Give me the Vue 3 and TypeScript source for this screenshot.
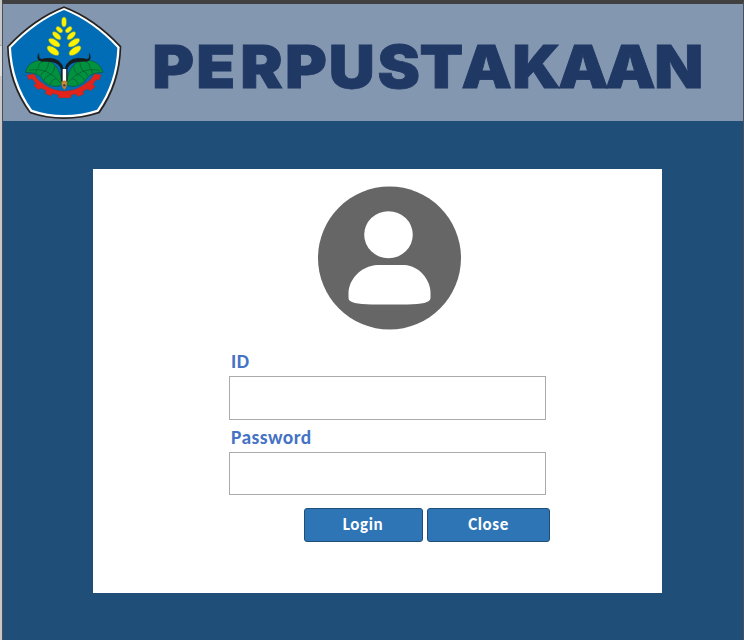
<script setup lang="ts">
import { reactive } from 'vue'

interface Field {
  key: 'id' | 'password'
  label: string
  type: string
}

interface Grain {
  x: number
  y: number
  rx: number
  ry: number
  angle: number
}

const fields: Field[] = [
  { key: 'id', label: 'ID', type: 'text' },
  { key: 'password', label: 'Password', type: 'password' },
]

const form = reactive({ id: '', password: '' })

// The heading is stretched horizontally; each letter is centred on its own stop.
const stretch = 1.09
const letterStops = [33.3, 75.8, 121.5, 166, 211.7, 258.7, 301.5, 346.7, 396.5, 443.3, 490.3, 538.7]
  .map((x) => (x / stretch).toFixed(2))
  .join(' ')

const grains: Grain[] = [
  { x: 192, y: 66, rx: 7.5, ry: 15, angle: 0 },
  { x: 178, y: 89, rx: 7, ry: 12, angle: -48 },
  { x: 206, y: 89, rx: 7, ry: 12, angle: 48 },
  { x: 170, y: 107, rx: 8, ry: 16, angle: -48 },
  { x: 214, y: 107, rx: 8, ry: 16, angle: 48 },
  { x: 163, y: 128, rx: 9, ry: 20, angle: -57 },
  { x: 222, y: 128, rx: 9, ry: 20, angle: 57 },
  { x: 159, y: 152, rx: 10, ry: 21, angle: -55 },
  { x: 225, y: 152, rx: 10, ry: 21, angle: 55 },
]

function close(): void {
  form.id = ''
  form.password = ''
}
</script>

<template>
  <div class="window">
    <div class="edge"><span class="edge-tab"></span></div>
    <main class="screen">
      <header class="header">
        <svg class="logo" viewBox="18 18 348 342" aria-hidden="true">
          <path
            d="M192 19 Q284 53 364 139 Q361 254 299 340 Q247 357 192 357 Q138 357 89 340 Q24 254 21 139 Q102 53 192 19Z"
            fill="#262422"
          />
          <path
            d="M192 24 Q282 59 359 141 Q355 251 295 335 Q246 352 192 352 Q139 352 92 335 Q30 251 26 141 Q104 59 192 24Z"
            fill="#fff"
          />
          <path
            d="M192 30 Q279 65 352 143 Q348 248 291 329 Q244 345 192 345 Q141 345 96 329 Q38 248 33 143 Q107 65 192 30Z"
            fill="#006db6"
          />
          <ellipse
            v-for="(g, i) in grains"
            :key="i"
            :cx="g.x"
            :cy="g.y"
            :rx="g.rx"
            :ry="g.ry"
            :transform="`rotate(${g.angle} ${g.x} ${g.y})`"
            fill="#fff200"
            stroke="#4c8d68"
            stroke-width="1.5"
          />
          <path
            d="M80 225 L102 221 Q111 239 127 249 Q158 273 193 273 Q228 273 258 249 Q275 238 283 221 L304 224 L298 241 L289 239 L279 253 L286 260 L271 273 L263 267 L249 275 L252 283 L233 290 L228 283 L214 285 L213 294 L175 294 L174 285 L158 281 L153 288 L135 281 L138 272 L123 265 L116 270 L101 257 L107 250 L96 236 L86 240Z"
            fill="#e2231a"
            stroke="#414d69"
            stroke-width="1.5"
          />
          <g fill="#00923f" stroke="#0c512f" stroke-width="2">
            <path d="M76 217 Q84 187 113 182 Q147 176 166 197 Q182 216 187 253 Q170 264 149 256 Q132 250 123 232 Q112 218 76 217Z" />
            <path d="M309 217 Q300 187 272 182 Q238 176 219 197 Q203 216 198 253 Q215 264 236 256 Q253 250 263 232 Q274 218 309 217Z" />
          </g>
          <g fill="none" stroke="#0a5630" stroke-width="2">
            <path d="M86 211 Q142 198 184 251 M114 205 Q115 189 128 183 M137 212 Q145 201 146 187 M154 222 Q165 211 164 198 M112 206 L107 220 M137 212 Q123 218 122 228 M155 223 Q137 227 132 241 M169 236 Q153 239 151 254" />
            <path d="M299 211 Q243 198 201 251 M271 205 Q270 189 257 183 M248 212 Q240 201 239 187 M231 222 Q220 211 221 198 M273 206 L278 220 M248 212 Q262 218 263 228 M230 223 Q248 227 253 241 M216 236 Q232 239 234 254" />
          </g>
          <path
            d="M116 161 Q107 179 125 184 Q143 183 157 185 Q181 191 184 210 L184 244 L190 244 L190 207 Q184 178 151 175 Q135 175 124 178 Q114 175 116 161Z M268 161 Q277 179 260 184 Q242 183 228 185 Q204 191 201 210 L201 244 L195 244 L195 207 Q201 178 234 175 Q250 175 261 178 Q271 175 268 161Z"
            fill="#171b1b"
            stroke="#171b1b"
            stroke-width="2"
          />
          <path d="M187 207h12v38h-12z" fill="#fff" />
          <path d="M187 207v38M200 207v38" fill="none" stroke="#252525" stroke-width="2" />
          <path d="M185 245 Q193 239 201 245 Q203 259 193 269 Q183 259 185 245Z" fill="#cd8540" stroke="#805e30" />
          <circle cx="193" cy="256" r="3.5" fill="#353d35" />
        </svg>
        <h1 class="title">
          <svg class="title-art" viewBox="0 0 590 100">
            <text class="title-text" :x="letterStops" y="68" :transform="`scale(${stretch} 1)`">PERPUSTAKAAN</text>
          </svg>
        </h1>
      </header>
      <form class="card" @submit.prevent>
        <svg class="avatar" viewBox="-0.5 0 144 144" aria-hidden="true">
          <circle cx="72" cy="72" r="71.5" fill="#666" />
          <ellipse cx="71" cy="48.7" rx="24.3" ry="23.5" fill="#fff" />
          <path d="M60 79 H87 C102 80 113 94 113 107 V112 C113 117 104 118 90 118.500 H54 C40 118 31 117 31 112 V107 C31 94 43 80 60 79Z" fill="#fff" />
        </svg>
        <div class="fields">
          <label v-for="f in fields" :key="f.key" class="field" :class="f.key">
            <span class="label">{{ f.label }}</span>
            <input v-model="form[f.key]" class="input" :type="f.type" />
          </label>
        </div>
        <div class="actions">
          <button class="button login" type="submit">Login</button>
          <button class="button close" type="button" @click="close">Close</button>
        </div>
      </form>
    </main>
  </div>
</template>

<style>
body {
  margin: 0;
}
</style>

<style scoped>
.window {
  display: flex;
  box-sizing: border-box;
  width: 744px;
  height: 640px;
  overflow: hidden;
  font-family: Calibri, Carlito, Lato, sans-serif;
}
.edge {
  width: 2px;
  padding-top: 45px;
  box-sizing: border-box;
  background: #c8c8c8;
}
.edge-tab {
  display: block;
  height: 30px;
  border-top: 1px solid #aaa;
  background: #dededc;
}
.screen {
  flex: 1;
  box-sizing: border-box;
  border: 1px solid #4a5057;
  border-top: 4px solid #404040;
  border-bottom: 0;
  background: #1f4e79;
}
.header {
  display: flex;
  box-sizing: border-box;
  height: 117px;
  padding: 2px 0 0 3px;
  background: #8497b0;
}
.logo {
  flex: none;
  width: 116px;
  height: 114px;
}
.title {
  margin: 14px 0 0 18px;
}
.title-art {
  display: block;
  width: 590px;
  height: 100px;
}
.title-text {
  font: 900 58.500px Inter, sans-serif;
  font-kerning: none;
  text-anchor: middle;
  fill: #1f3864;
  stroke: #1f3864;
  stroke-width: 0.800px;
}
.card {
  box-sizing: border-box;
  width: 569px;
  height: 424px;
  margin: 48px 0 0 90px;
  padding: 17px 0 0 136px;
  background: #fff;
}
.avatar {
  display: block;
  width: 144px;
  height: 144px;
  margin-left: 88px;
}
.fields {
  width: 317px;
  padding-top: 21px;
}
.field {
  display: block;
}
.label {
  display: block;
  height: 25px;
  padding-left: 2px;
  font-size: 19.500px;
  font-weight: 700;
  letter-spacing: 0.450px;
  line-height: 21px;
  color: #4472c4;
}
.password .label {
  height: 32px;
  line-height: 34px;
}
.input {
  display: block;
  box-sizing: border-box;
  width: 317px;
  height: 44px;
  margin: 0;
  padding: 4px 8px;
  border: 1px solid #ababab;
  border-radius: 0;
  background: #fff;
  font: inherit;
}
.password .input {
  height: 43px;
}
.actions {
  display: flex;
  gap: 4px;
  padding: 13px 0 0 75px;
}
.button {
  box-sizing: border-box;
  height: 34px;
  padding: 0 1px 1px 0;
  border: 1px solid #1f4e79;
  border-radius: 3px;
  background: #2e75b6;
  font: 700 17px/30px Calibri, Carlito, Lato, sans-serif;
  letter-spacing: 0.600px;
  color: #fff;
}
.login {
  width: 119px;
}
.close {
  width: 123px;
  padding-right: 0;
}
</style>
